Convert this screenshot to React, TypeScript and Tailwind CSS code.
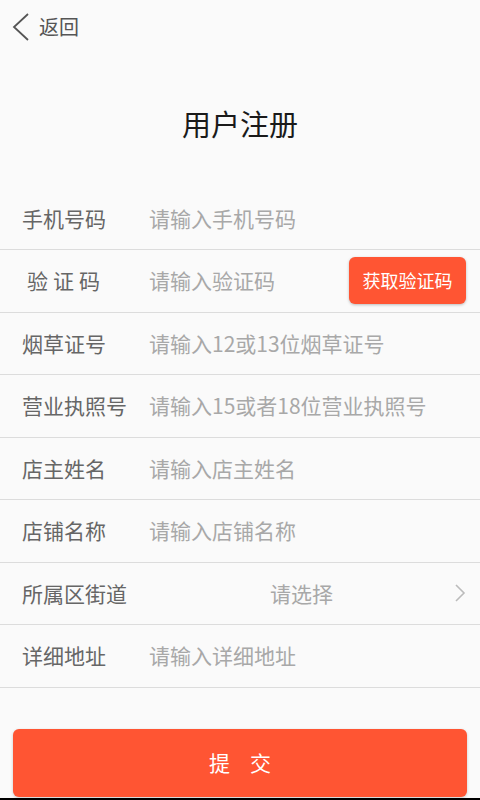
import React from "react";

const font = { fontFamily: '"Noto Sans CJK SC", "Noto Sans", sans-serif' };

function Row({ label, placeholder, children }: { label: React.ReactNode; placeholder?: string; children?: React.ReactNode }) {
  return (
    <div className="flex h-[62.5px] items-center border-b border-[#dcdcdc] pl-[22px] pr-[14px]">
      <div className="w-[127px] shrink-0 text-[21px] text-[#666]">{label}</div>
      {placeholder && <div className="flex-1 text-[21px] text-[#a8a8a8]">{placeholder}</div>}
      {children}
    </div>
  );
}

export default function App() {
  return (
    <div className="relative flex h-[800px] w-[480px] flex-col bg-[#fafafa]" style={font}>
      <div className="flex h-[54px] items-center pl-[12px]">
        <svg width="18" height="28" viewBox="0 0 18 28" fill="none">
          <path d="M16 1 L2 14 L16 27" stroke="#555" strokeWidth="1.8" />
        </svg>
        <span className="ml-[9px] text-[20px] text-[#555]">返回</span>
      </div>
      <div className="mt-[42px] mb-[35.5px] flex h-[56px] items-center justify-center text-[29px] text-[#1a1a1a]">
        用户注册
      </div>
      <div className="flex flex-col">
        <Row label="手机号码" placeholder="请输入手机号码" />
        <Row label={<span className="pl-[5px] tracking-[5px]">验证码</span>} placeholder="请输入验证码">
          <button className="mr-0 h-[47px] w-[117px] rounded-[6px] bg-[#ff5533] text-[18px] text-white shadow-[0_1px_3px_rgba(0,0,0,0.25)]">
            获取验证码
          </button>
        </Row>
        <Row label="烟草证号" placeholder="请输入12或13位烟草证号" />
        <Row label="营业执照号" placeholder="请输入15或者18位营业执照号" />
        <Row label="店主姓名" placeholder="请输入店主姓名" />
        <Row label="店铺名称" placeholder="请输入店铺名称" />
        <Row label="所属区街道">
          <div className="flex-1 text-center text-[21px] text-[#a8a8a8]">请选择</div>
          <svg width="12" height="20" viewBox="0 0 12 20" fill="none">
            <path d="M2 2 L10 10 L2 18" stroke="#bbb" strokeWidth="1.6" />
          </svg>
        </Row>
        <Row label="详细地址" placeholder="请输入详细地址" />
      </div>
      <div className="flex-1" />
      <div className="px-[13px] pb-[3px]">
        <button className="flex h-[68px] w-full items-center justify-center rounded-[6px] bg-[#ff5533] text-[21px] text-white shadow-[0_1px_3px_rgba(0,0,0,0.2)]">
          <span className="tracking-[20px] pl-[20px]">提交</span>
        </button>
      </div>
      <div className="absolute bottom-0 left-0 h-[2px] w-full bg-black" />
    </div>
  );
}
